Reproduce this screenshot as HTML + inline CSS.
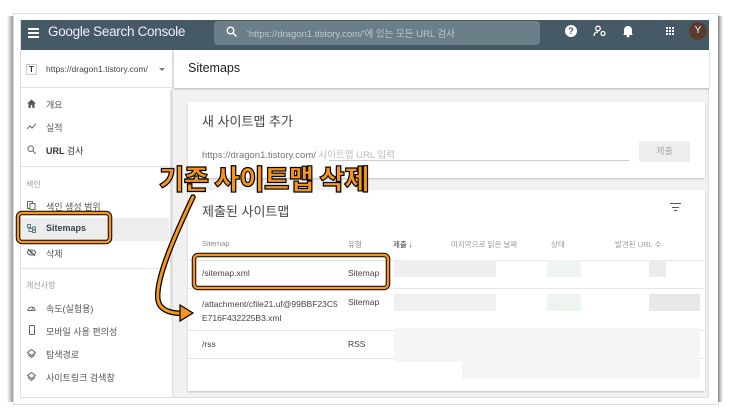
<!DOCTYPE html>
<html><head><meta charset="utf-8"><style>
*{margin:0;padding:0;box-sizing:border-box}
body{width:730px;height:418px;background:#fff;position:relative;overflow:hidden;font-family:"Liberation Sans","Noto Sans CJK KR",sans-serif;color:#333}
.a{position:absolute}
.t{position:absolute;white-space:nowrap}
.side .t{font-size:9px;color:#555}
.ic{position:absolute;width:9px;height:9px}
.blk{position:absolute;background:#ececec}
</style></head><body>
<div class="a" style="left:13px;top:13px;width:706px;height:392px;border:1px solid #ddd;background:#fff"></div>
<div class="a" style="left:7px;top:16px;width:6px;height:386px;background:linear-gradient(90deg,#fff,#999)"></div>
<div class="a" style="left:718px;top:16px;width:5px;height:386px;background:linear-gradient(90deg,#888,#fff)"></div>
<div class="a" style="left:20px;top:20px;width:689px;height:378px;background:#f1f1f1;border:1px solid #ddd"></div>
<div class="a" style="left:21px;top:20px;width:688px;height:30px;background:#455a64"></div>
<div class="a" style="left:28px;top:28px;width:11px;height:2px;background:#fff;box-shadow:0 4px 0 #fff,0 8px 0 #fff"></div>
<div class="t" style="left:48px;top:24px;font-size:13.5px;color:#eef;letter-spacing:-0.3px">Google Search Console</div>
<div class="a" style="left:214px;top:21px;width:326px;height:24px;background:#6b7f88;border-radius:4px"></div>
<svg class="a" style="left:226px;top:26px" width="11" height="11" viewBox="0 0 11 11"><circle cx="4.5" cy="4.5" r="3.3" stroke="#fff" stroke-width="1.4" fill="none"/><path d="M7 7l3.5 3.5" stroke="#fff" stroke-width="1.5"/></svg>
<div class="t" style="left:247px;top:26px;font-size:9.5px;color:#bfc8cc">'https://dragon1.tistory.com/'에 있는 모든 URL 검사</div>
<div class="a" style="left:565px;top:25px;width:12px;height:12px;border-radius:50%;background:#fff;color:#455a64;font-size:9px;font-weight:bold;text-align:center;line-height:12px">?</div>
<svg class="a" style="left:593px;top:25px" width="14" height="12" viewBox="0 0 14 12"><circle cx="5" cy="3.5" r="2.3" stroke="#fff" fill="none" stroke-width="1.3"/><path d="M1 11c0-3 2-4 4-4" stroke="#fff" fill="none" stroke-width="1.3"/><circle cx="10" cy="8.5" r="2" stroke="#fff" fill="none" stroke-width="1.3"/></svg>
<svg class="a" style="left:622px;top:24px" width="12" height="14" viewBox="0 0 12 14"><path d="M2 10V6a4 4 0 018 0v4l1 1H1z" fill="#fff"/><circle cx="6" cy="12" r="1.4" fill="#fff"/></svg>
<div class="a" style="left:666px;top:27px;width:2px;height:2px;background:#fff;box-shadow:3px 0 #fff,6px 0 #fff,0 3px #fff,3px 3px #fff,6px 3px #fff,0 6px #fff,3px 6px #fff,6px 6px #fff"></div>
<div class="a" style="left:689px;top:22px;width:18px;height:18px;border-radius:50%;background:#5d3a2f;color:#fff;font-size:10px;text-align:center;line-height:18px">Y</div>
<div class="side">
<div class="a" style="left:21px;top:50px;width:152px;height:347px;background:#fff;border-right:1px solid #e0e0e0"></div>
<div class="a" style="left:21px;top:87px;width:152px;height:1px;background:#e0e0e0"></div>
<div class="a" style="left:170px;top:90px;width:2px;height:225px;background:#ddd"></div>
<div class="a" style="left:26px;top:64px;width:11px;height:11px;border:1px solid #ccc;font-size:8px;text-align:center;line-height:9px;font-weight:bold">T</div>
<div class="t" style="left:46px;top:64px;font-size:8.5px;color:#444">https://dragon1.tistory.com/</div>
<div class="a" style="left:159px;top:68px;border:3px solid transparent;border-top-color:#777"></div>
<svg class="ic" style="left:27px;top:99px" viewBox="0 0 9 9"><path d="M4.5 0.5L0 4.5h1.5V9h2.2V6h1.6v3h2.2V4.5H9z" fill="#555"/></svg>
<div class="t" style="left:46px;top:98px">개요</div>
<svg class="ic" style="left:27px;top:122px" viewBox="0 0 9 9"><path d="M0 7l3-3 2 2 4-4" stroke="#666" fill="none" stroke-width="1"/></svg>
<div class="t" style="left:46px;top:121px">실적</div>
<svg class="ic" style="left:27px;top:145px" viewBox="0 0 9 9"><circle cx="3.7" cy="3.7" r="2.8" stroke="#666" fill="none"/><path d="M5.8 5.8l3 3" stroke="#666"/></svg>
<div class="t" style="left:46px;top:144px;font-weight:bold;color:#333">URL <span style="font-weight:normal">검사</span></div>
<div class="a" style="left:21px;top:166px;width:148px;height:1px;background:#e0e0e0"></div>
<div class="t" style="left:26px;top:179px;font-size:8px!important;color:#999!important">색인</div>
<svg class="ic" style="left:27px;top:201px" viewBox="0 0 9 9"><rect x="0.5" y="0.5" width="5" height="7" stroke="#666" fill="none"/><rect x="3" y="2.5" width="5" height="6" stroke="#666" fill="#fff"/></svg>
<div class="t" style="left:46px;top:200px">색인 생성 범위</div>
<div class="a" style="left:21px;top:218px;width:148px;height:23px;background:#ededed"></div>
<svg class="ic" style="left:27px;top:224px" viewBox="0 0 9 9"><rect x="0.5" y="0.5" width="3" height="3" stroke="#607d8b" fill="none"/><rect x="5.5" y="3" width="3" height="2.5" stroke="#607d8b" fill="none"/><rect x="5.5" y="6" width="3" height="2.5" stroke="#607d8b" fill="none"/><path d="M2 3.5v4h3.5M2 4.5h3.5" stroke="#607d8b" fill="none"/></svg>
<div class="t" style="left:46px;top:223px;font-weight:bold;color:#37474f">Sitemaps</div>
<svg class="ic" style="left:27px;top:248px" viewBox="0 0 9 9"><ellipse cx="4.5" cy="4.5" rx="4" ry="2.5" stroke="#555" fill="none"/><circle cx="4.5" cy="4.5" r="1.2" fill="#555"/><path d="M1 1l7 7" stroke="#555"/></svg>
<div class="t" style="left:46px;top:247px">삭제</div>
<div class="a" style="left:21px;top:268px;width:148px;height:1px;background:#e0e0e0"></div>
<div class="t" style="left:26px;top:280px;font-size:8px!important;color:#999!important">개선사항</div>
<svg class="ic" style="left:27px;top:303px" viewBox="0 0 9 9"><path d="M1 7.5a3.5 3.5 0 117 0z" stroke="#666" fill="none"/><path d="M4.5 7l2-2.5" stroke="#666"/></svg>
<div class="t" style="left:46px;top:302px">속도(실험용)</div>
<div class="a" style="left:29px;top:325px;width:6px;height:10px;border:1.3px solid #666;border-radius:1px"></div>
<div class="t" style="left:46px;top:325px">모바일 사용 편의성</div>
<svg class="ic" style="left:27px;top:349px" viewBox="0 0 9 9"><path d="M4.5 0.5L8.5 3.5 4.5 6.5 0.5 3.5z M1 5.5l3.5 3 3.5-3" stroke="#666" fill="none"/></svg>
<div class="t" style="left:46px;top:348px">탐색경로</div>
<svg class="ic" style="left:27px;top:372px" viewBox="0 0 9 9"><path d="M4.5 0.5L8.5 3.5 4.5 6.5 0.5 3.5z M1 5.5l3.5 3 3.5-3" stroke="#666" fill="none"/></svg>
<div class="t" style="left:46px;top:371px">사이트링크 검색창</div>
</div>
<div class="a" style="left:174px;top:50px;width:535px;height:38px;background:#fff;box-shadow:0 1px 2px rgba(0,0,0,.25)"></div>
<div class="t" style="left:188px;top:61px;font-size:12.5px;color:#222">Sitemaps</div>
<div class="a" style="left:188px;top:102px;width:517px;height:76px;background:#fff;box-shadow:0 1px 2px rgba(0,0,0,.2)"></div>
<div class="t" style="left:202px;top:111px;font-size:13px;color:#444">새 사이트맵 추가</div>
<div class="t" style="left:202px;top:147px;font-size:9.5px;color:#777">https://dragon1.tistory.com/ <span style="color:#bbb">사이트맵 URL 입력</span></div>
<div class="a" style="left:329px;top:160px;width:300px;height:1px;background:#ccc"></div>
<div class="a" style="left:639px;top:141px;width:51px;height:21px;background:#eee;border-radius:2px;font-size:9px;color:#aaa;text-align:center;line-height:21px">제출</div>
<div class="a" style="left:188px;top:190px;width:517px;height:201px;background:#fff;box-shadow:0 1px 2px rgba(0,0,0,.2)"></div>
<div class="t" style="left:202px;top:201px;font-size:13px;color:#444">제출된 사이트맵</div>
<div class="a" style="left:670px;top:203px;width:11px;height:1.3px;background:#555"></div>
<div class="a" style="left:672px;top:206.5px;width:7px;height:1.3px;background:#555"></div>
<div class="a" style="left:674px;top:210px;width:3px;height:1.3px;background:#555"></div>
<div class="t" style="left:202px;top:239px;font-size:7.5px;color:#888">Sitemap</div>
<div class="t" style="left:348px;top:239px;font-size:7.5px;color:#888">유형</div>
<div class="t" style="left:393px;top:239px;font-size:7.5px;color:#333">제출 ↓</div>
<div class="t" style="left:451px;top:239px;font-size:7.5px;color:#999">마지막으로 읽은 날짜</div>
<div class="t" style="left:551px;top:239px;font-size:7.5px;color:#999">상태</div>
<div class="t" style="left:615px;top:239px;font-size:7.5px;color:#999">발견된 URL 수</div>
<div class="a" style="left:188px;top:260px;width:517px;height:1px;background:#e5e5e5"></div>
<div class="a" style="left:188px;top:288px;width:517px;height:1px;background:#e5e5e5"></div>
<div class="a" style="left:188px;top:330px;width:517px;height:1px;background:#e5e5e5"></div>
<div class="a" style="left:188px;top:358px;width:517px;height:1px;background:#e5e5e5"></div>
<div class="t" style="left:202px;top:268px;font-size:8.5px;color:#444">/sitemap.xml</div>
<div class="t" style="left:348px;top:268px;font-size:8.5px;color:#444">Sitemap</div>
<div class="t" style="left:202px;top:297px;font-size:8.5px;color:#444;line-height:14px">/attachment/cfile21.uf@99BBF23C5<br>E716F432225B3.xml</div>
<div class="t" style="left:348px;top:297px;font-size:8.5px;color:#444">Sitemap</div>
<div class="t" style="left:202px;top:339px;font-size:8.5px;color:#444">/rss</div>
<div class="t" style="left:348px;top:339px;font-size:8.5px;color:#444">RSS</div>
<div class="blk" style="left:394px;top:260px;width:102px;height:17px;background:#efefef"></div>
<div class="blk" style="left:547px;top:260px;width:34px;height:17px;background:#eef5f0"></div>
<div class="blk" style="left:649px;top:260px;width:17px;height:17px;background:#ebebeb"></div>
<div class="blk" style="left:394px;top:294px;width:102px;height:17px;background:#f0f0f0"></div>
<div class="blk" style="left:547px;top:294px;width:34px;height:17px;background:#eef5f0"></div>
<div class="blk" style="left:649px;top:294px;width:51px;height:17px;background:#e8e8e8"></div>
<div class="blk" style="left:394px;top:328px;width:306px;height:34px;background:#f5f5f5"></div>
<div class="blk" style="left:462px;top:362px;width:238px;height:17px;background:#f5f5f5"></div>
<svg class="a" style="left:0;top:0" width="730" height="418">
<path d="M193 197 C175 235 155 280 158 300 C160 312 175 314 185 313" stroke="#000" stroke-width="5.5" fill="none" stroke-linecap="round"/>
<path d="M193 197 C175 235 155 280 158 300 C160 312 175 314 185 313" stroke="#f7941d" stroke-width="3" fill="none" stroke-linecap="round"/>
<path d="M180 305 L193 313 L180 321 Z" fill="#f7941d" stroke="#000" stroke-width="1.2"/>
<rect x="18" y="213" width="92" height="29" rx="4" fill="none" stroke="#000" stroke-width="4.5"/>
<rect x="18" y="213" width="92" height="29" rx="4" fill="none" stroke="#f7941d" stroke-width="2.5"/>
<rect x="194" y="255" width="194" height="33" rx="4" fill="none" stroke="#000" stroke-width="4.5"/>
<rect x="194" y="255" width="194" height="33" rx="4" fill="none" stroke="#f7941d" stroke-width="2.5"/>
</svg>
<div class="t" style="left:159px;top:157px;font-size:27.5px;font-weight:900;color:#f7941d;-webkit-text-stroke:1.2px #000;letter-spacing:-0.5px;font-family:'Noto Sans CJK KR',sans-serif">기존 사이트맵 삭제</div>
</body></html>
